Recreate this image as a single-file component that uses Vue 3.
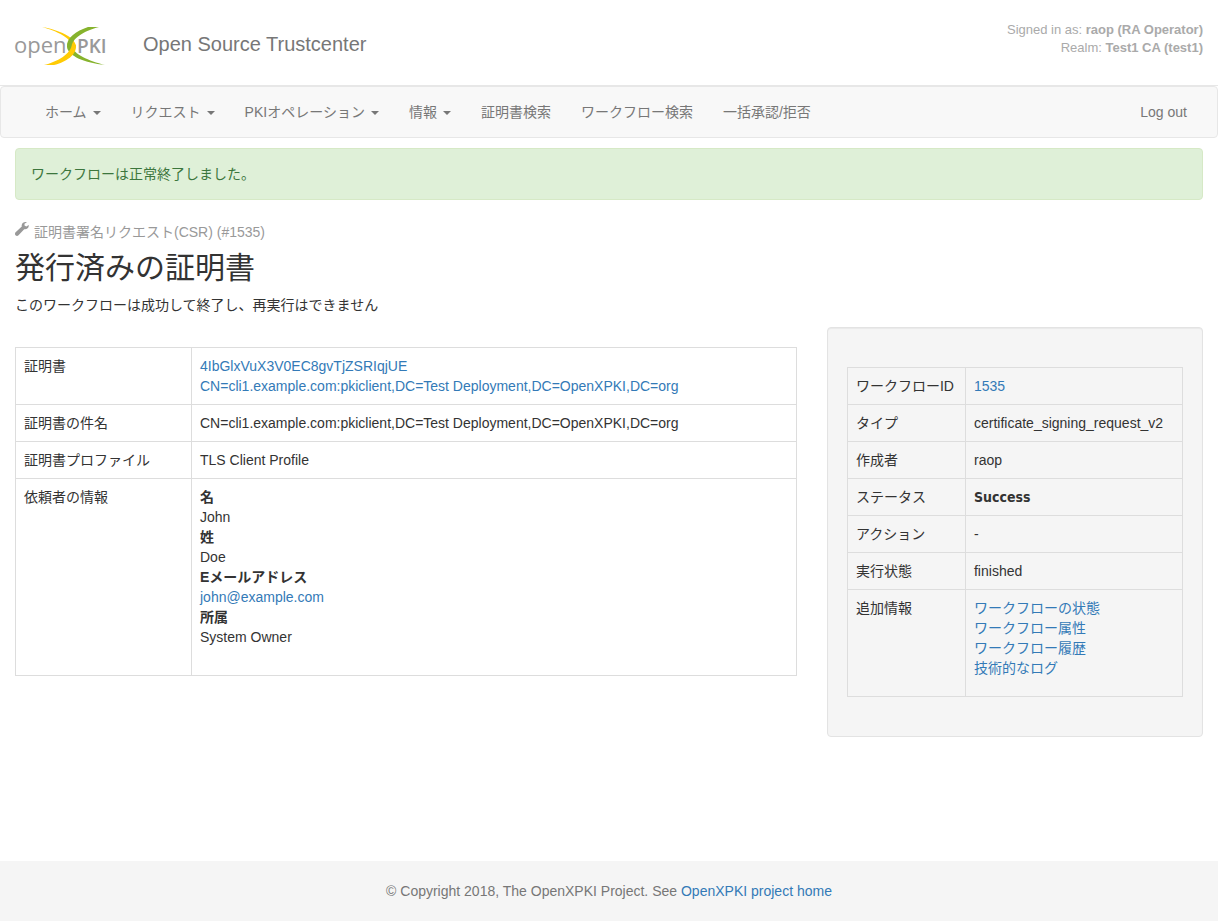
<script setup>
const menu = [
  { label: 'ホーム', drop: true },
  { label: 'リクエスト', drop: true },
  { label: 'PKIオペレーション', drop: true },
  { label: '情報', drop: true },
  { label: '証明書検索' },
  { label: 'ワークフロー検索' },
  { label: '一括承認/拒否' },
]

const requestor = [
  { label: '名', value: 'John' },
  { label: '姓', value: 'Doe' },
  { label: 'Eメールアドレス', value: 'john@example.com', href: 'mailto:john@example.com' },
  { label: '所属', value: 'System Owner' },
]

const subject = 'CN=cli1.example.com:pkiclient,DC=Test Deployment,DC=OpenXPKI,DC=org'

const details = ['ワークフローの状態', 'ワークフロー属性', 'ワークフロー履歴', '技術的なログ']
</script>

<template>
  <div class="page">
    <header class="header">
      <a class="brand" href="#" aria-label="OpenXPKI">
        <svg class="logo" width="92" height="40" viewBox="0 0 92 40" aria-hidden="true">
          <text class="open" x="-1" y="27">open</text>
          <text class="pki" x="62" y="27">PKI</text>
          <path d="M27 1 C44 4 60 11 61 20 L57 20 C56 12 42 5 27 1Z" fill="#ffcb05" />
          <path d="M84 1 L73 1 C61 5 51 12 52 21 C53 30 70 37 90 39 C74 35 58 28 57 20 C57 13 68 5 84 1Z" fill="#86b32d" />
          <path d="M61 19 C62 29 51 36 39 39 L29 39 C42 36 56 28 57 18Z" fill="#ffcb05" />
        </svg>
      </a>
      <span class="title">Open Source Trustcenter</span>
      <div class="session">
        Signed in as: <b>raop (RA Operator)</b><br />
        Realm: <b>Test1 CA (test1)</b>
      </div>
    </header>

    <nav class="navbar">
      <ul class="menu">
        <li v-for="item in menu" :key="item.label">
          <a href="#">{{ item.label }}<span v-if="item.drop" class="caret"></span></a>
        </li>
      </ul>
      <a class="logout" href="#">Log out</a>
    </nav>

    <main class="content">
      <div class="alert" role="status">ワークフローは正常終了しました。</div>

      <p class="crumb">
        <svg class="wrench" width="14" height="14" viewBox="0 0 14 14" aria-hidden="true">
          <path d="M13.700 3 L11.300 4.500 L9.500 3.500 L9.500 1.700 L11.900 .3 C9.600 -.4 7 .8 6.700 3 C6.600 3.600 6.700 4.100 6.800 4.600 L.6 10.300 C-.3 11.200 -.2 12.600 .5 13.300 C1.300 14.100 2.600 14.200 3.500 13.300 L9.200 7.200 C11.800 7.700 14.200 5.700 13.700 3Z" fill="#999" />
        </svg>
        証明書署名リクエスト(CSR) (#1535)
      </p>
      <h2>発行済みの証明書</h2>
      <p class="lead">このワークフローは成功して終了し、再実行はできません</p>

      <div class="row">
        <section class="primary">
          <table>
            <tbody>
              <tr>
                <th scope="row">証明書</th>
                <td>
                  <a href="#">4IbGlxVuX3V0EC8gvTjZSRIqjUE<br />{{ subject }}</a>
                </td>
              </tr>
              <tr>
                <th scope="row">証明書の件名</th>
                <td>{{ subject }}</td>
              </tr>
              <tr>
                <th scope="row">証明書プロファイル</th>
                <td>TLS Client Profile</td>
              </tr>
              <tr>
                <th scope="row">依頼者の情報</th>
                <td>
                  <dl>
                    <template v-for="r in requestor" :key="r.label">
                      <dt>{{ r.label }}</dt>
                      <dd>
                        <a v-if="r.href" :href="r.href">{{ r.value }}</a>
                        <template v-else>{{ r.value }}</template>
                      </dd>
                    </template>
                  </dl>
                </td>
              </tr>
            </tbody>
          </table>
        </section>

        <aside class="well">
          <table>
            <tbody>
              <tr><th scope="row">ワークフローID</th><td><a href="#">1535</a></td></tr>
              <tr><th scope="row">タイプ</th><td>certificate_signing_request_v2</td></tr>
              <tr><th scope="row">作成者</th><td>raop</td></tr>
              <tr><th scope="row">ステータス</th><td><b class="state">Success</b></td></tr>
              <tr><th scope="row">アクション</th><td>-</td></tr>
              <tr><th scope="row">実行状態</th><td>finished</td></tr>
              <tr>
                <th scope="row">追加情報</th>
                <td>
                  <ul class="links">
                    <li v-for="d in details" :key="d"><a href="#">{{ d }}</a></li>
                  </ul>
                </td>
              </tr>
            </tbody>
          </table>
        </aside>
      </div>
    </main>

    <footer class="footer">
      <p>© Copyright 2018, The OpenXPKI Project. See <a href="#">OpenXPKI project home</a></p>
    </footer>
  </div>
</template>

<style>
body {
  margin: 0;
  background: #fff;
}
</style>

<style scoped>
* {
  box-sizing: border-box;
}

.page {
  display: flex;
  flex-direction: column;
  min-height: 100vh;
  color: #333;
  font-family: "Liberation Sans", "Noto Sans CJK JP", sans-serif;
  font-size: 14px;
  line-height: 20px;
}

a {
  color: #337ab7;
  text-decoration: none;
}

p,
h2,
ul,
dl,
dd {
  margin: 0;
  padding: 0;
}

ul {
  list-style: none;
}

.header {
  display: flex;
  align-items: flex-start;
  height: 86px;
  padding: 21px 15px 0;
  border-bottom: 1px solid #e7e7e7;
}

.brand {
  display: block;
  margin-top: 5px;
}

.logo {
  display: block;
  overflow: visible;
}

.open {
  fill: #999;
  font-family: "Open Sans", sans-serif;
  font-size: 22px;
  font-weight: 400;
}

.pki {
  fill: #999;
  font-family: "Open Sans", sans-serif;
  font-size: 19px;
  font-weight: 600;
}

.title {
  margin: 13px 0 0 36px;
  color: #777;
  font-size: 20px;
}

.session {
  margin-left: auto;
  color: #aaa;
  font-size: 13px;
  line-height: 18px;
  text-align: right;
}

.navbar {
  display: flex;
  justify-content: space-between;
  padding: 0 15px;
  border: 1px solid #e7e7e7;
  border-radius: 4px;
  background: #f8f8f8;
}

.menu {
  display: flex;
  margin-left: 14px;
}

.menu a,
.logout {
  display: flex;
  align-items: center;
  padding: 15px;
  color: #777;
}

.caret {
  margin: 2px 0 0 6px;
  border-top: 4px solid #777;
  border-right: 4px solid transparent;
  border-left: 4px solid transparent;
}

.content {
  flex: 1;
  padding: 10px 15px 0;
}

.alert {
  margin-bottom: 22px;
  padding: 15px;
  border: 1px solid #d6e9c6;
  border-radius: 4px;
  background: #dff0d8;
  color: #3c763d;
}

.crumb {
  display: flex;
  gap: 5px;
  color: #999;
}

h2 {
  margin: 9px 0 11px;
  font-size: 30px;
  font-weight: 400;
  line-height: 33px;
}

.row {
  display: grid;
  grid-template-columns: calc((100% + 30px) * 2 / 3 - 30px) 1fr;
  gap: 30px;
  align-items: start;
  margin-top: 12px;
}

.primary {
  padding-top: 20px;
}

.well {
  padding: 39px 19px;
  border: 1px solid #e3e3e3;
  border-radius: 4px;
  background: #f5f5f5;
  box-shadow: inset 0 1px 1px rgba(0, 0, 0, 0.05);
}

table {
  width: 100%;
  border-collapse: collapse;
}

th,
td {
  padding: 8px;
  border: 1px solid #ddd;
  text-align: left;
  vertical-align: top;
}

th {
  width: 118px;
  font-weight: 400;
}

.primary th {
  width: 176px;
}

dl {
  margin-bottom: 20px;
}

dt {
  font-weight: 700;
}

.state {
  font-family: "DejaVu Sans Condensed", "DejaVu Sans", sans-serif;
}

.links {
  margin-bottom: 10px;
}

.footer {
  padding: 20px 15px;
  background: #f5f5f5;
  color: #777;
  text-align: center;
}
</style>
